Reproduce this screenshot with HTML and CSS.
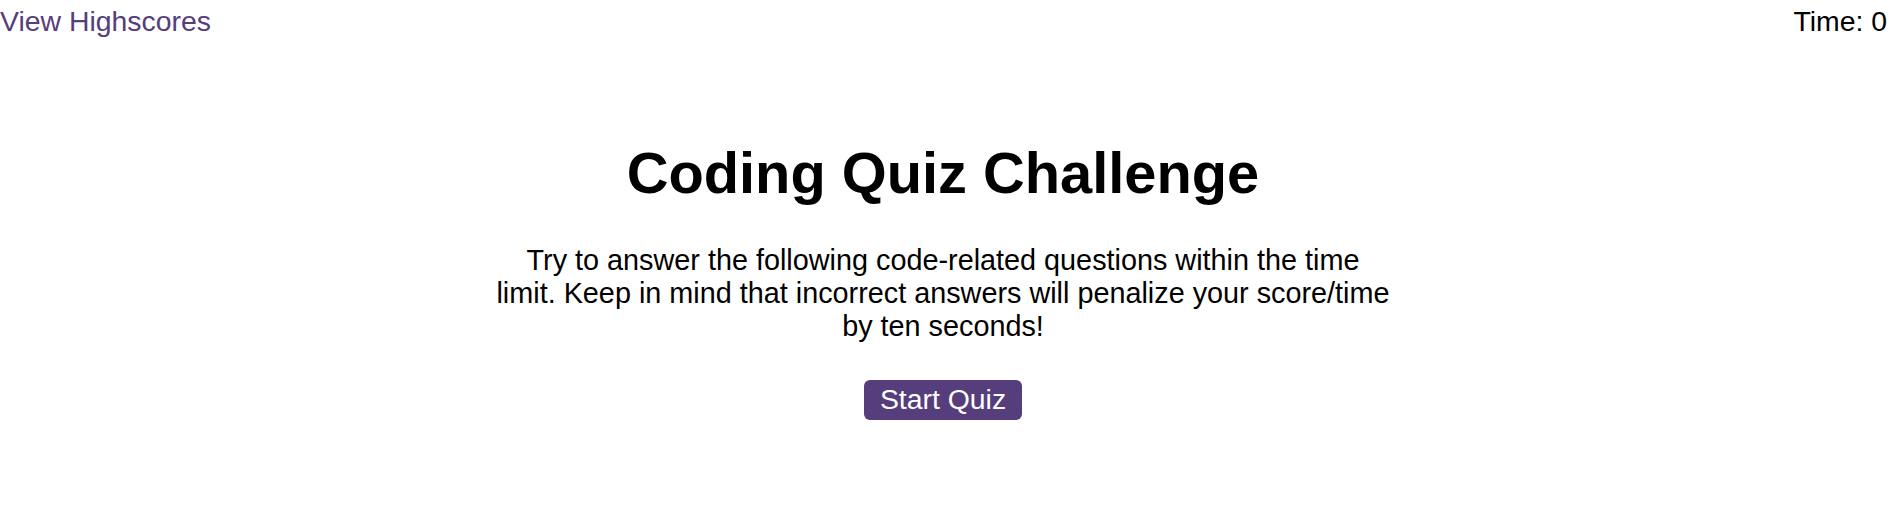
FILE: index.html
```html
<!DOCTYPE html>
<html lang="en">
<head>
<meta charset="utf-8">
<title>Coding Quiz Challenge</title>
<link rel="stylesheet" href="styles.css">
</head>
<body>
<header class="topbar">
  <a class="highscores" href="#">View Highscores</a>
  <div class="timer">Time: <span>0</span></div>
</header>
<main class="intro">
  <h1 class="title">Coding Quiz Challenge</h1>
  <p class="lead">Try to answer the following code-related questions within the time limit. Keep in mind that incorrect answers will penalize your score/time by ten seconds!</p>
  <button class="start">Start Quiz</button>
</main>
</body>
</html>
```
FILE: styles.css
```css
html, body {
  margin: 0;
  padding: 0;
  background: #fff;
}
body {
  font-family: "Liberation Sans", Arial, sans-serif;
  font-size: 28.4px;
  color: #000;
}
.topbar {
  display: flex;
  justify-content: space-between;
  align-items: flex-start;
  padding: 5px 5px 0 0;
}
.highscores {
  color: #563d7c;
  text-decoration: none;
}
.intro {
  display: flex;
  flex-direction: column;
  align-items: center;
  text-align: center;
  padding-right: 6px;
}
.title {
  font-size: 57.8px;
  font-weight: bold;
  margin: 103px 0 0;
  line-height: 1.14;
}
.lead {
  width: 898px;
  font-size: 28.8px;
  margin: 37.5px 0 0;
  line-height: 32.6px;
}
.start {
  margin-top: 38px;
  font-family: inherit;
  font-size: 28.4px;
  color: #fff;
  background: #563d7c;
  border: none;
  border-radius: 6px;
  padding: 3px 16px 4px;
}
```
